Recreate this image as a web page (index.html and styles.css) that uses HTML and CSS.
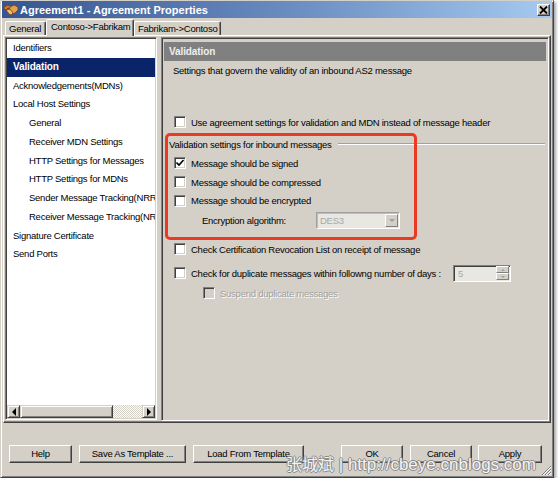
FILE: index.html
```html
<!DOCTYPE html>
<html>
<head>
<meta charset="utf-8">
<link rel="stylesheet" href="styles.css">
</head>
<body>
<div class="window">
  <div class="titlebar">
    <svg class="icon" width="16" height="14" viewBox="0 0 16 14">
      <path d="M1 4 L5 2 L9 4 L8 6 L5 5 L3 7 L1 6 Z" fill="#c9782e" stroke="#7a3e10" stroke-width="0.8"/>
      <path d="M15 4 L11 2 L7 4 L6 7 L9 11 L12 10 L15 7 Z" fill="#e2a24a" stroke="#7a3e10" stroke-width="0.8"/>
      <path d="M3 7 L6 11 L8 12 L10 10 L7 6 Z" fill="#f0c070" stroke="#7a3e10" stroke-width="0.8"/>
    </svg>
    <span class="title-text">Agreement1 - Agreement Properties</span>
    <div class="close">
      <svg width="9" height="8" viewBox="0 0 9 8"><path d="M1 0.5 L8 7.5 M8 0.5 L1 7.5" stroke="#000" stroke-width="1.8"/></svg>
    </div>
  </div>

  <div class="tabs">
    <div class="tab tab-general">General</div>
    <div class="tab tab-active">Contoso-&gt;Fabrikam</div>
    <div class="tab tab-third">Fabrikam-&gt;Contoso</div>
  </div>

  <div class="tabpage">
    <div class="list">
      <div class="item">Identifiers</div>
      <div class="item selected">Validation</div>
      <div class="item">Acknowledgements(MDNs)</div>
      <div class="item">Local Host Settings</div>
      <div class="item child">General</div>
      <div class="item child">Receiver MDN Settings</div>
      <div class="item child">HTTP Settings for Messages</div>
      <div class="item child">HTTP Settings for MDNs</div>
      <div class="item child">Sender Message Tracking(NRR)</div>
      <div class="item child">Receiver Message Tracking(NRR)</div>
      <div class="item">Signature Certificate</div>
      <div class="item">Send Ports</div>
      <div class="hscroll">
        <div class="sbtn"><span class="arrow-left"></span></div>
        <div class="thumb"></div>
        <div class="track"></div>
        <div class="sbtn"><span class="arrow-right"></span></div>
      </div>
    </div>

    <div class="panel">
      <div class="panel-header">Validation</div>
      <div class="desc">Settings that govern the validity of an inbound AS2 message</div>

      <div class="row row-use"><span class="cb"></span>Use agreement settings for validation and MDN instead of message header</div>

      <div class="legend"><span>Validation settings for inbound messages</span><span class="etch"></span></div>

      <div class="row row-group row-first"><span class="cb"><svg width="8" height="8" viewBox="0 0 8 8"><path d="M0.5 3.5 L3 6 L7.5 1" fill="none" stroke="#000" stroke-width="1.6"/></svg></span>Message should be signed</div>
      <div class="row row-group"><span class="cb"></span>Message should be compressed</div>
      <div class="row row-group"><span class="cb"></span>Message should be encrypted</div>
      <div class="enc-row">
        <span class="enc-label">Encryption algorithm:</span>
        <div class="combo"><span class="combo-text">DES3</span><span class="combo-btn"><span class="arrow-down"></span></span></div>
      </div>

      <div class="row row-crl"><span class="cb"></span>Check Certification Revocation List on receipt of message</div>
      <div class="row row-dup"><span class="cb"></span><span class="dup-text">Check for duplicate messages within followng number of days :</span>
        <div class="spinner"><span class="spin-text">5</span><span class="spin-btns"><span class="spin-b"><span class="arrow-up-s"></span></span><span class="spin-b"><span class="arrow-down-s"></span></span></span></div>
      </div>
      <div class="row row-suspend disabled"><span class="cb cb-disabled"></span>Suspend duplicate messages</div>

      <div class="redbox"></div>
    </div>
  </div>

  <div class="buttons">
    <div class="btn btn-help">Help</div>
    <div class="btn btn-save">Save As Template ...</div>
    <div class="btn btn-load">Load From Template</div>
    <div class="btn btn-ok">OK</div>
    <div class="btn btn-cancel">Cancel</div>
    <div class="btn btn-apply">Apply</div>
  </div>

  <svg class="grip" width="11" height="11" viewBox="0 0 11 11">
    <path d="M10 1 L1 10 M10 4 L4 10 M10 7 L7 10" stroke="#808080" stroke-width="1"/>
    <path d="M10 2 L2 10 M10 5 L5 10 M10 8 L8 10" stroke="#fff" stroke-width="1"/>
  </svg>

  <div class="watermark"><span class="wm-cjk">张城斌</span> | http://cbeye.cnblogs.com</div>
</div>
</body>
</html>
```

FILE: styles.css
```css
* { box-sizing: border-box; }

body {
  margin: 0;
  background: #ffffff;
  font-family: "Liberation Sans", Arial, sans-serif;
  font-size: 9.5px;
  letter-spacing: -0.25px;
  color: #000;
}

.window {
  position: relative;
  width: 554px;
  height: 478px;
  background: #d4d0c8;
  border: 1px solid;
  border-color: #d4d0c8 #404040 #404040 #d4d0c8;
  box-shadow: inset 1px 1px #ffffff, inset -1px -1px #808080, 2px 2px 3px rgba(0,0,0,0.35);
  padding: 0 1px;
  display: flex;
  flex-direction: column;
}

/* Title bar */
.titlebar {
  height: 17px;
  display: flex;
  align-items: center;
  background: linear-gradient(to right, #375590, #6d8fc3 55%, #a6caf0);
  color: #fff;
  font-weight: bold;
  font-size: 11px;
  letter-spacing: 0;
  padding-left: 1px;
}
.icon { flex: none; margin-right: 1px; }
.title-text { white-space: nowrap; }
.close {
  margin-left: auto;
  margin-right: 2px;
  width: 13px;
  height: 12px;
  background: #d4d0c8;
  border: 1px solid;
  border-color: #fff #404040 #404040 #fff;
  box-shadow: inset -1px -1px #808080;
  display: flex;
  align-items: center;
  justify-content: center;
}

/* Tabs */
.tabs {
  height: 17px;
  display: flex;
  align-items: flex-end;
  padding-left: 3px;
}
.tab {
  height: 14px;
  border: 1px solid;
  border-bottom: none;
  border-color: #fff #404040 transparent #fff;
  box-shadow: inset -1px 0 #808080;
  border-radius: 2px 2px 0 0;
  line-height: 13px;
  padding-left: 3px;
  white-space: nowrap;
  overflow: hidden;
}
.tab-general { width: 41px; }
.tab-active {
  width: 88px;
  height: 17px;
  margin-bottom: -1px;
  position: relative;
  z-index: 1;
  background: #d4d0c8;
  padding-left: 4px;
  line-height: 14px;
}
.tab-third { width: 87px; }

/* Tab page */
.tabpage {
  margin: 0 1px;
  height: 388px;
  border: 1px solid;
  border-color: #fff #404040 #404040 #fff;
  box-shadow: inset -1px -1px #808080;
  padding: 1px;
  display: flex;
  gap: 4px;
  align-items: flex-start;
}

/* List */
.list {
  width: 152px;
  height: 383px;
  flex: none;
  background: #fff;
  border: 1px solid;
  border-color: #808080 #fff #fff #808080;
  box-shadow: inset 1px 1px #404040, inset -1px -1px #d4d0c8;
  padding: 1px;
  display: flex;
  flex-direction: column;
  overflow: hidden;
}
.item {
  height: 18.75px;
  line-height: 18.75px;
  padding-left: 6px;
  white-space: nowrap;
  overflow: hidden;
  flex: none;
}
.item.child { padding-left: 22px; }
.item.selected {
  background: #0a246a;
  color: #fff;
  font-weight: bold;
  font-size: 10px;
  letter-spacing: -0.15px;
}
.hscroll {
  margin-top: auto;
  height: 13px;
  display: flex;
  flex: none;
}
.sbtn, .thumb {
  background: #d4d0c8;
  border: 1px solid;
  border-color: #d4d0c8 #404040 #404040 #d4d0c8;
  box-shadow: inset 1px 1px #fff, inset -1px -1px #808080;
}
.sbtn {
  width: 13px;
  flex: none;
  display: flex;
  align-items: center;
  justify-content: center;
}
.thumb { width: 93px; flex: none; }
.track {
  flex: 1;
  background: repeating-conic-gradient(#ffffff 0 25%, #d4d0c8 0 50%) 0 0 / 2px 2px;
}
.arrow-left {
  width: 0; height: 0;
  border-top: 4px solid transparent;
  border-bottom: 4px solid transparent;
  border-right: 4px solid #000;
}
.arrow-right {
  width: 0; height: 0;
  border-top: 4px solid transparent;
  border-bottom: 4px solid transparent;
  border-left: 4px solid #000;
}

/* Panel */
.panel {
  position: relative;
  flex: 1;
  height: 384px;
  border: 1px solid;
  border-color: #808080 #fff #fff #808080;
  box-shadow: inset 1px 1px #404040, inset -1px -1px #d4d0c8;
  padding: 1px;
}
.panel-header {
  margin: 3px 1px 0 1px;
  height: 19px;
  line-height: 19px;
  background: #808080;
  color: #eeeeee;
  font-weight: bold;
  font-size: 10px;
  letter-spacing: -0.1px;
  padding-left: 5px;
}
.desc {
  height: 17px;
  line-height: 17px;
  padding-left: 10px;
  margin-top: 1px;
  white-space: nowrap;
}
.row {
  display: flex;
  align-items: center;
  height: 18px;
  padding-left: 11px;
  white-space: nowrap;
}
.row-use { margin-top: 34px; }
.row-group { height: 18.7px; }
.row-first { margin-top: 2px; }
.row-crl { margin-top: 10px; }
.row-dup { margin-top: 6px; }
.row-suspend { margin-top: 2px; padding-left: 40px; }

.cb {
  width: 12px;
  height: 12px;
  flex: none;
  margin-right: 5px;
  background: #fff;
  border: 1px solid;
  border-color: #808080 #fff #fff #808080;
  box-shadow: inset 1px 1px #404040, inset -1px -1px #d4d0c8;
  display: flex;
  align-items: center;
  justify-content: center;
}
.cb-disabled { background: #d4d0c8; }
.disabled { color: #a0a0a0; text-shadow: 1px 1px #ffffff; }

.legend {
  display: flex;
  align-items: center;
  height: 16px;
  margin-top: 5px;
  padding-left: 6px;
  padding-right: 2px;
  white-space: nowrap;
}
.etch {
  flex: 1;
  margin-left: 6px;
  height: 2px;
  border-top: 1px solid #a0a0a0;
  border-bottom: 1px solid #ffffff;
}

.enc-row {
  display: flex;
  align-items: center;
  height: 20px;
  padding-left: 39px;
}
.enc-label { width: 114px; flex: none; white-space: nowrap; }
.combo {
  width: 84px;
  height: 17px;
  display: flex;
  align-items: center;
  background: #e9e7e1;
  border: 1px solid;
  border-color: #a0a0a0 #fff #fff #a0a0a0;
  box-shadow: inset 1px 1px #c0bdb5;
  padding: 1px 1px 1px 3px;
}
.combo-text { flex: 1; color: #a8a8a8; }
.combo-btn {
  width: 13px;
  height: 13px;
  background: #d4d0c8;
  border: 1px solid;
  border-color: #fff #808080 #808080 #fff;
  display: flex;
  align-items: center;
  justify-content: center;
}
.arrow-down {
  width: 0; height: 0;
  border-left: 3px solid transparent;
  border-right: 3px solid transparent;
  border-top: 3px solid #a0a0a0;
}

.dup-text { width: 262px; flex: none; }
.spinner {
  width: 58px;
  height: 17px;
  display: flex;
  align-items: center;
  background: #e9e7e1;
  border: 1px solid;
  border-color: #808080 #fff #fff #808080;
  box-shadow: inset 1px 1px #404040;
  padding: 1px 1px 1px 4px;
}
.spin-text { flex: 1; color: #a8a8a8; }
.spin-btns { width: 13px; height: 14px; display: flex; flex-direction: column; }
.spin-b {
  flex: 1;
  background: #d4d0c8;
  border: 1px solid;
  border-color: #fff #808080 #808080 #fff;
  display: flex;
  align-items: center;
  justify-content: center;
}
.arrow-up-s {
  width: 0; height: 0;
  border-left: 2px solid transparent;
  border-right: 2px solid transparent;
  border-bottom: 2px solid #a0a0a0;
}
.arrow-down-s {
  width: 0; height: 0;
  border-left: 2px solid transparent;
  border-right: 2px solid transparent;
  border-top: 2px solid #a0a0a0;
}

.redbox {
  position: absolute;
  left: 3px;
  top: 95px;
  width: 252px;
  height: 107px;
  border: 3px solid #ea3a22;
  border-radius: 5px;
}

/* Buttons */
.buttons {
  display: flex;
  margin-top: 22px;
  padding-left: 7px;
  gap: 7px;
}
.btn {
  height: 18px;
  line-height: 16px;
  text-align: center;
  background: #d4d0c8;
  border: 1px solid;
  border-color: #fff #404040 #404040 #fff;
  box-shadow: inset -1px -1px #808080;
  white-space: nowrap;
}
.btn-help { width: 63px; }
.btn-save { width: 107px; }
.btn-load { width: 111px; }
.btn-ok { width: 62px; margin-left: 30px; }
.btn-cancel { width: 62px; }
.btn-apply { width: 64px; margin-left: -1px; }

.grip {
  position: absolute;
  right: 1px;
  bottom: 1px;
}

.watermark {
  position: absolute;
  left: 285px;
  top: 453px;
  font-size: 17px;
  line-height: 18px;
  letter-spacing: 0;
  white-space: nowrap;
  color: #f4f4f4;
  text-shadow: -1px 0 #8a8a8a, 1px 0 #8a8a8a, 0 -1px #8a8a8a, 0 1px #8a8a8a;
  font-family: "Liberation Sans", "Noto Sans CJK SC", sans-serif;
}
.wm-cjk { font-family: "Noto Sans CJK SC", sans-serif; font-size: 16px; }
```
